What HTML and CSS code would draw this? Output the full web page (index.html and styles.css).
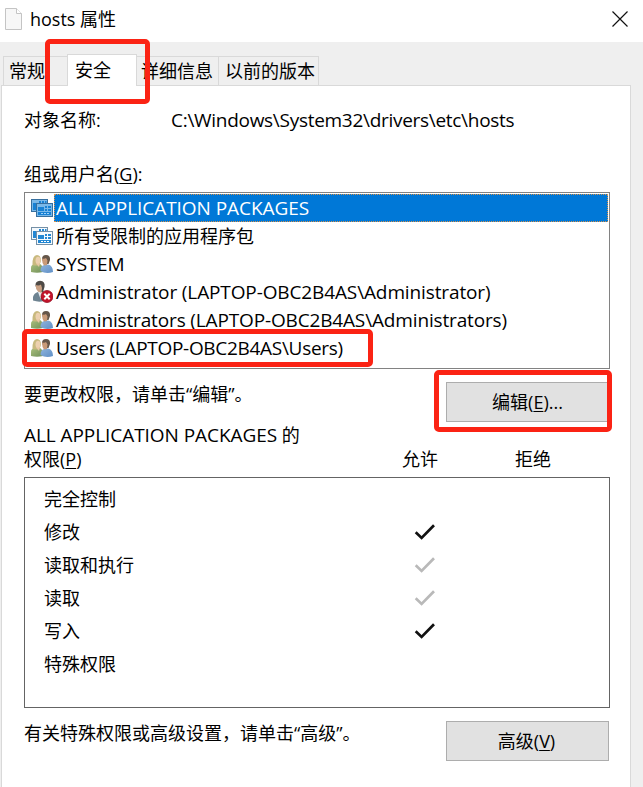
FILE: index.html
```html
<!DOCTYPE html>
<html lang="zh-CN">
<head>
<meta charset="utf-8">
<title>hosts 属性</title>
<link rel="stylesheet" href="styles.css">
</head>
<body>
<svg class="defs" width="0" height="0">
  <defs>
    <linearGradient id="green" x1="0" y1="0" x2="1" y2="1"><stop offset="0" stop-color="#a9bf7c"/><stop offset="1" stop-color="#71905a"/></linearGradient>
    <linearGradient id="blue" x1="0" y1="0" x2="1" y2="1"><stop offset="0" stop-color="#8fb4dc"/><stop offset="1" stop-color="#5f8fc6"/></linearGradient>
    <symbol id="users" viewBox="0 0 22 20">
      <path d="M0 18V13.500Q0 10.500 4 10L9 10Q12 11 12 18Q6 19.500 0 18Z" fill="url(#green)"/>
      <path d="M1.500 11Q1 1.500 6 1Q10 1 10 7L8.500 11Q5 12 1.500 11Z" fill="#c8b97e"/>
      <ellipse cx="7" cy="6.500" rx="2.500" ry="3.700" fill="#ecd0af"/>
      <path d="M5 9.500L8 13L9 9.500Z" fill="#e7c6a3"/>
      <path d="M9.500 17Q9.500 12 13 11L17 10.500Q22 11.500 22 18Q15 20.500 9.500 17Z" fill="url(#blue)"/>
      <path d="M11 5Q11 1 15 1Q19.500 1 19 6L17.500 10H13Z" fill="#655649"/>
      <path d="M11 4.500Q14 5 15 4L16.500 6.500L16 11L13 11.500Q11 9 11 4.500Z" fill="#c99a78"/>
    </symbol>
    <symbol id="packages" viewBox="0 0 22 18">
      <rect x=".5" y=".5" width="16" height="12" fill="#f4f9fd" stroke="#7590a6"/>
      <path d="M2 4H7V11H2ZM8 2H10V4H8ZM11 2H13V4H11ZM14 2H15.500V4H14Z" fill="#2387d3"/>
      <rect x="5.500" y="4.500" width="16" height="13" fill="#f4f9fd" stroke="#7590a6"/>
      <path d="M7 8H13V12H7ZM14 7H16V9H14ZM17 7H20V9H17ZM14 10H16V12H14ZM17 10H20V12H17ZM7 13H20V16H7Z" fill="#2387d3"/>
      <path d="M10 14.500H12M13 14.500H15M16 14.500H18" stroke="#fff" stroke-width="1"/>
    </symbol>
    <symbol id="packages-selected" viewBox="0 0 22 18">
      <rect x=".5" y=".5" width="16" height="12" fill="#79b8e8" stroke="#376f9e"/>
      <path d="M2 4H7V11H2ZM8 2H10V4H8ZM11 2H13V4H11ZM14 2H15.500V4H14Z" fill="#1781d4"/>
      <rect x="5.500" y="4.500" width="16" height="13" fill="#79b8e8" stroke="#376f9e"/>
      <path d="M7 8H13V12H7ZM14 7H16V9H14ZM17 7H20V9H17ZM14 10H16V12H14ZM17 10H20V12H17ZM7 13H20V16H7Z" fill="#1781d4"/>
      <path d="M10 14.500H12M13 14.500H15M16 14.500H18" stroke="#9ed0f5" stroke-width="1"/>
    </symbol>
    <symbol id="blocked" viewBox="0 0 22 24">
      <path d="M2 20.500V17Q3 13 7 12L12 11Q16 13 16 20Q9 23 2 20.500Z" fill="#6e8391"/>
      <path d="M7 12L9.500 19L12 12Z" fill="#e9eef2"/>
      <path d="M4.500 6Q4 1 9 .800Q14.500 1 13.500 7L12 12H8Z" fill="#4e4a46"/>
      <path d="M4.500 5Q8 6 10 4.500L11 8L10.500 13L7 11.500Q4.500 9 4.500 5Z" fill="#c9a184"/>
      <circle cx="16" cy="16.500" r="6" fill="#c3142b" stroke="#960f22" stroke-width=".8"/>
      <path d="M13.300 13.800L18.700 19.200M18.700 13.800L13.300 19.200" stroke="#fff" stroke-width="2"/>
    </symbol>
    <symbol id="check" viewBox="0 0 22 18">
      <path d="M1.700 9.200L7.600 14.900L20 2.200" fill="none" stroke="currentColor" stroke-width="2.700"/>
    </symbol>
  </defs>
</svg>
<div class="window">
  <header class="titlebar">
    <svg class="file-icon" width="17" height="22" viewBox="0 0 17 22"><path d="M.500 .500H11.500L16.500 5.500V21.500H.500Z" fill="#f7f7f7" stroke="#c4c4c4"/><path d="M11.500 .500V5.500H16.500" fill="#fff" stroke="#c4c4c4"/></svg>
    <h1 class="title">hosts 属性</h1>
    <svg class="close" width="16" height="16" viewBox="0 0 16 16"><path d="M.500 .500L15.500 15.500M15.500 .500L.500 15.500" stroke="#111" stroke-width="1.200"/></svg>
  </header>
  <nav class="tabs">
    <div class="tab general">常规</div>
    <div class="tab active">安全</div>
    <div class="tab details">详细信息</div>
    <div class="tab previous">以前的版本</div>
  </nav>
  <main class="panel">
    <div class="object"><span class="object-label">对象名称:</span><span class="latin t-path">C:\Windows\System32\drivers\etc\hosts</span></div>
    <div class="group-label">组或用户名(<u>G</u>):</div>
    <ul class="users">
      <li class="selected"><svg class="pack"><use href="#packages-selected"/></svg><span class="name latin t-all">ALL APPLICATION PACKAGES</span></li>
      <li><svg class="pack"><use href="#packages"/></svg><span class="name">所有受限制的应用程序包</span></li>
      <li><svg class="people"><use href="#users"/></svg><span class="name latin t-system">SYSTEM</span></li>
      <li><svg class="person"><use href="#blocked"/></svg><span class="name latin t-admin">Administrator (LAPTOP-OBC2B4AS\Administrator)</span></li>
      <li><svg class="people"><use href="#users"/></svg><span class="name latin t-admins">Administrators (LAPTOP-OBC2B4AS\Administrators)</span></li>
      <li><svg class="people"><use href="#users"/></svg><span class="name latin t-users">Users (LAPTOP-OBC2B4AS\Users)</span></li>
    </ul>
    <div class="edit-row"><p>要更改权限，请单击“编辑”。</p><button>编辑(<u>E</u>)...</button></div>
    <div class="perm-head">
      <div class="perm-title"><span class="latin t-all">ALL APPLICATION PACKAGES</span> 的<br>权限(<u>P</u>)</div>
      <div class="allow">允许</div><div class="deny">拒绝</div>
    </div>
    <ul class="perms">
      <li>完全控制</li>
      <li>修改<svg class="check"><use href="#check"/></svg></li>
      <li>读取和执行<svg class="check inherited"><use href="#check"/></svg></li>
      <li>读取<svg class="check inherited"><use href="#check"/></svg></li>
      <li>写入<svg class="check"><use href="#check"/></svg></li>
      <li>特殊权限</li>
    </ul>
    <div class="advanced-row"><p>有关特殊权限或高级设置，请单击“高级”。</p><button class="advanced">高级(<u>V</u>)</button></div>
  </main>
  <div class="mark mark-tab"></div>
  <div class="mark mark-user"></div>
  <div class="mark mark-edit"></div>
</div>
</body>
</html>
```
FILE: styles.css
```css
* { box-sizing: border-box; }
body {
  margin: 0;
  background: #efefef;
  color: #000;
  font: 18px/24px "Open Sans", "Noto Sans CJK SC", sans-serif;
}
.defs { position: absolute; }
ul, p, h1 { margin: 0; padding: 0; list-style: none; font: inherit; }
u { text-underline-offset: 2px; text-decoration-thickness: 1px; }
.latin { font-size: 19px; }
.t-path { letter-spacing: -.29px; }
.t-all { letter-spacing: -.06px; }
.t-system { letter-spacing: -.2px; }
.t-admin { letter-spacing: -.12px; }
.t-admins { letter-spacing: -.15px; }
.t-users { letter-spacing: -.3px; }
.window {
  position: relative;
  display: flex;
  flex-direction: column;
  width: 643px;
  height: 787px;
  overflow: hidden;
  white-space: nowrap;
}
.titlebar {
  display: flex;
  align-items: center;
  height: 42px;
  padding: 0 15px 4px 5px;
  background: #fff;
}
.title { margin-left: 8px; flex: 1; }
.tabs {
  display: flex;
  align-items: flex-end;
  height: 43px;
  padding-left: 3px;
}
.tab {
  height: 29px;
  border: 1px solid #d9d9d9;
  border-bottom: 0;
  padding: 2px 0 0 5px;
}
.general { width: 64px; border-right: 0; }
.active {
  z-index: 1;
  width: 70px;
  height: 32px;
  margin-bottom: -1px;
  padding: 3px 0 0 7px;
  background: #fff;
}
.details { width: 82px; padding-left: 4px; border-left: 0; }
.previous { width: 100px; border-left: 0; padding-left: 6px; }
.panel {
  flex: 1;
  width: 630px;
  margin-left: 1px;
  padding: 22px 20px 0 22px;
  border: 1px solid #d9d9d9;
  border-bottom: 0;
  background: #fff;
}
.object { display: flex; height: 54px; }
.object-label { width: 147px; }
.group-label { height: 30px; }
.users {
  width: 586px;
  height: 177px;
  padding: 1px;
  border: 1px solid #828282;
}
.users li { display: flex; align-items: center; height: 28px; padding-left: 5px; }
.users svg { flex: none; width: 22px; height: 20px; }
.users .pack { height: 18px; }
.users .person { height: 24px; }
.name { flex: 1; height: 28px; margin-left: 1px; padding-left: 2px; line-height: 28px; }
.selected .name { background: #0078d7; color: #fff; outline: 1px dotted #d99249; outline-offset: -1px; }
.edit-row, .advanced-row { display: flex; justify-content: space-between; width: 585px; }
.edit-row { height: 54px; padding-top: 13px; }
button {
  width: 163px;
  height: 40px;
  padding: 0;
  border: 1px solid #adadad;
  background: #e1e1e1;
  color: #000;
  font: inherit;
}
.advanced { padding-right: 2px; }
.perm-head { display: grid; grid-template-columns: 378px 113px auto; align-items: end; height: 54px; padding-bottom: 6px; }
.perms {
  width: 586px;
  height: 231px;
  padding: 4px 0 0 19px;
  border: 1px solid #646464;
}
.perms li { display: grid; grid-template-columns: 370px 22px; align-items: center; height: 33px; }
.check { width: 22px; height: 18px; color: #111; }
.inherited { color: #b9b9b9; }
.advanced-row { padding-top: 13px; }
.mark { position: absolute; z-index: 2; border: 5px solid #fb2314; border-radius: 5px; }
.mark-tab { left: 45px; top: 39px; width: 105px; height: 65px; }
.mark-user { left: 22px; top: 329px; width: 351px; height: 38px; }
.mark-edit { left: 434px; top: 370px; width: 178px; height: 62px; }
```
